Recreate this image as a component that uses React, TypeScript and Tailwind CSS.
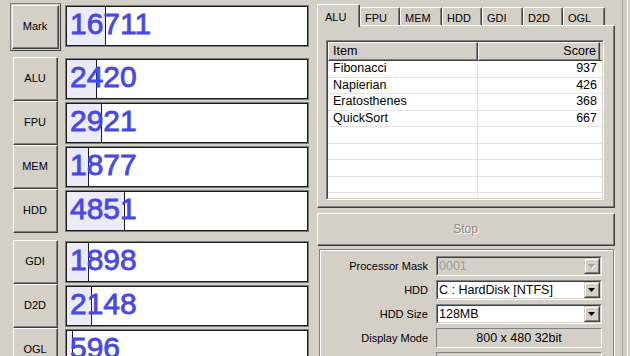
import React from 'react';

type Row = { label: string; value: string; fill: number };

const group1: Row[] = [
  { label: 'ALU', value: '2420', fill: 29 },
  { label: 'FPU', value: '2921', fill: 34 },
  { label: 'MEM', value: '1877', fill: 21 },
  { label: 'HDD', value: '4851', fill: 57 },
];
const group2: Row[] = [
  { label: 'GDI', value: '1898', fill: 21 },
  { label: 'D2D', value: '2148', fill: 24 },
  { label: 'OGL', value: '596', fill: 5 },
];

function ScoreBox({ value, fill }: { value: string; fill: number }) {
  return (
    <div className="h-[42px] w-[244px] border border-[#7a7a7a]">
      <div className="relative h-full w-full overflow-hidden border border-[#1c1c1c] bg-white">
        <div
          className="absolute bottom-0 left-0 top-0 border-r border-[#1a1a1a] bg-[#eaeaf8]"
          style={{ width: fill + 1 }}
        />
        <div className="relative pl-[3px] pt-[2px] text-[30px] leading-[30px] text-[#4848e2] [-webkit-text-stroke:0.8px_#4848e2]">
          {value}
        </div>
      </div>
    </div>
  );
}

function SideButton({ label }: { label: string }) {
  return (
    <div className="h-[44px] w-[45px] border border-b-[#404040] border-l-white border-r-[#404040] border-t-white">
      <div className="flex h-full w-full items-center justify-center border-b border-r border-b-[#808080] border-r-[#808080] text-[11px] text-black">
        {label}
      </div>
    </div>
  );
}

function ScoreRow({ row }: { row: Row }) {
  return (
    <div className="flex h-[44px] shrink-0">
      <div className="ml-[13px]">
        <SideButton label={row.label} />
      </div>
      <div className="ml-[7px] mt-[1px]">
        <ScoreBox value={row.value} fill={row.fill} />
      </div>
    </div>
  );
}

const tabs = [
  { name: 'ALU', w: 43 },
  { name: 'FPU', w: 40 },
  { name: 'MEM', w: 42 },
  { name: 'HDD', w: 40 },
  { name: 'GDI', w: 41 },
  { name: 'D2D', w: 40 },
  { name: 'OGL', w: 42 },
];

const listRows = [
  ['Fibonacci', '937'],
  ['Napierian', '426'],
  ['Eratosthenes', '368'],
  ['QuickSort', '667'],
  ['', ''],
  ['', ''],
  ['', ''],
  ['', ''],
  ['', ''],
];

function Arrow({ disabled }: { disabled?: boolean }) {
  return (
    <div className="flex h-full w-[16px] items-center justify-center border border-b-[#404040] border-l-[#d4d0c8] border-r-[#404040] border-t-[#d4d0c8] bg-[#d4d0c8]">
      <div className="flex h-full w-full items-center justify-center border border-b-[#808080] border-l-white border-r-[#808080] border-t-white">
        <svg width="8" height="5" viewBox="0 0 8 5">
          {disabled ? (
            <>
              <polygon points="1,1 8,1 4.5,5" fill="#ffffff" />
              <polygon points="0,0 7,0 3.5,4" fill="#a0a0a0" />
            </>
          ) : (
            <polygon points="0,0 7,0 3.5,4" fill="#000000" />
          )}
        </svg>
      </div>
    </div>
  );
}

function Combo({ text, disabled }: { text: string; disabled?: boolean }) {
  return (
    <div className="h-[20px] w-[166px] border border-b-white border-l-[#808080] border-r-white border-t-[#808080]">
      <div
        className={`flex h-full w-full border border-b-[#d4d0c8] border-l-[#404040] border-r-[#d4d0c8] border-t-[#404040] ${
          disabled ? 'bg-[#d4d0c8]' : 'bg-white'
        }`}
      >
        <div
          className={`flex-1 pl-[1px] text-[12.5px] leading-[16px] ${
            disabled ? 'text-[#a09c94]' : 'text-black'
          }`}
        >
          {text}
        </div>
        <Arrow disabled={disabled} />
      </div>
    </div>
  );
}

function StaticBox({ text }: { text: string }) {
  return (
    <div className="flex h-[20px] w-[166px] items-center justify-center border border-b-white border-l-[#808080] border-r-white border-t-[#808080] text-[12.5px] text-black">
      {text}
    </div>
  );
}

function SettingRow({ label, children }: { label: string; children: React.ReactNode }) {
  return (
    <div className="flex h-[20px] shrink-0 items-center">
      <div className="w-[108px] text-right text-[11px] text-black">{label}</div>
      <div className="ml-[8px]">{children}</div>
    </div>
  );
}

export default function App() {
  return (
    <div className="flex h-[356px] w-[630px] overflow-hidden bg-[#d4d0c8] font-['Liberation_Sans',Arial,sans-serif] text-black">
      {/* Left column */}
      <div className="flex w-[311px] shrink-0 flex-col pt-[3px]">
        <div className="flex h-[48px] shrink-0">
          <div className="ml-[10px] h-[48px] w-[51px] border border-b-[#404040] border-l-[#808080] border-r-[#404040] border-t-[#808080] p-[1px]">
            <div className="h-full w-full border border-b-[#404040] border-l-white border-r-[#404040] border-t-white">
              <div className="flex h-full w-full items-center justify-center border-b border-r border-b-[#808080] border-r-[#808080] text-[11px]">
                Mark
              </div>
            </div>
          </div>
          <div className="ml-[4px] mt-[2px]">
            <ScoreBox value="16711" fill={38} />
          </div>
        </div>
        <div className="mt-[6px] flex shrink-0 flex-col">
          {group1.map((r) => (
            <ScoreRow key={r.label} row={r} />
          ))}
        </div>
        <div className="mt-[7px] flex shrink-0 flex-col">
          {group2.map((r) => (
            <ScoreRow key={r.label} row={r} />
          ))}
        </div>
      </div>

      {/* Right column */}
      <div className="flex w-[319px] shrink-0">
        <div className="ml-[6px] flex w-[298px] shrink-0 flex-col pt-[4px]">
          {/* Tabs */}
          <div className="relative z-10 flex h-[21px] shrink-0 items-end">
            {tabs.map((t, i) =>
              i === 0 ? (
                <div
                  key={t.name}
                  className="-mb-[2px] flex h-[23px] items-start rounded-t-[2px] border-l border-r border-t border-l-white border-r-[#404040] border-t-white bg-[#d4d0c8] pl-[7px] pt-[4px] text-[11px] shadow-[inset_-1px_0_0_#808080]"
                  style={{ width: t.w }}
                >
                  {t.name}
                </div>
              ) : (
                <div
                  key={t.name}
                  className="flex h-[18px] items-start rounded-t-[2px] border-l border-r border-t border-l-white border-r-[#404040] border-t-white pl-[4px] pt-[2px] text-[11px] shadow-[inset_-1px_0_0_#808080]"
                  style={{ width: t.w }}
                >
                  {t.name}
                </div>
              )
            )}
          </div>
          {/* Tab panel */}
          <div className="h-[183px] shrink-0 border border-b-[#404040] border-l-white border-r-[#404040] border-t-white">
            <div className="h-full w-full border-b border-r border-b-[#808080] border-r-[#808080] pl-[8px] pt-[14px]">
              <div className="h-[160px] w-[278px] border border-b-white border-l-[#808080] border-r-white border-t-[#808080]">
                <div className="h-full w-full overflow-hidden border border-b-[#d4d0c8] border-l-[#404040] border-r-[#d4d0c8] border-t-[#404040] bg-white">
                  <div className="flex h-[19px] bg-[#d4d0c8]">
                    <div className="h-full w-[150px] border border-b-[#404040] border-l-white border-r-[#404040] border-t-white">
                      <div className="flex h-full items-center border-b border-r border-b-[#808080] border-r-[#808080] pl-[4px] text-[12.5px]">
                        Item
                      </div>
                    </div>
                    <div className="h-full w-[122px] border border-b-[#404040] border-l-white border-r-[#404040] border-t-white">
                      <div className="flex h-full items-center justify-end border-b border-r border-b-[#808080] border-r-[#808080] pr-[2px] text-[12.5px]">
                        Score
                      </div>
                    </div>
                    <div className="h-full flex-1 border-b border-t border-b-[#404040] border-t-white" />
                  </div>
                  {listRows.map(([a, b], i) => (
                    <div key={i} className="flex h-[16.5px] border-b border-[#e4e4e4] text-[12.5px] leading-[15px]">
                      <div className="w-[150px] border-r border-[#e4e4e4] pl-[5px]">{a}</div>
                      <div className="w-[122px] pr-[3px] text-right">{b}</div>
                    </div>
                  ))}
                </div>
              </div>
            </div>
          </div>

          {/* Stop button */}
          <div className="mt-[5px] h-[33px] w-full shrink-0 border border-b-[#404040] border-l-white border-r-[#404040] border-t-white">
            <div className="flex h-full w-full items-center justify-center border-b border-r border-b-[#808080] border-r-[#808080] text-[12px] text-[#8c8880] [text-shadow:1px_1px_0_#ffffff]">
              Stop
            </div>
          </div>

          {/* Settings group */}
          <div className="ml-[2px] mt-[3px] h-[140px] w-[295px] shrink-0 border border-[#808080] shadow-[inset_1px_1px_0_#ffffff,1px_1px_0_#ffffff]">
            <div className="flex flex-col gap-[4px] pt-[6px]">
              <SettingRow label="Processor Mask">
                <Combo text="0001" disabled />
              </SettingRow>
              <SettingRow label="HDD">
                <Combo text="C : HardDisk [NTFS]" />
              </SettingRow>
              <SettingRow label="HDD Size">
                <Combo text="128MB" />
              </SettingRow>
              <SettingRow label="Display Mode">
                <StaticBox text="800 x 480 32bit" />
              </SettingRow>
              <SettingRow label="Font Smoothing">
                <StaticBox text="Normal" />
              </SettingRow>
            </div>
          </div>
        </div>
        <div className="ml-[7px] h-full w-px shrink-0 bg-[#a8a49c]" />
        <div className="ml-[4px] h-full w-px shrink-0 bg-white" />
      </div>
    </div>
  );
}
